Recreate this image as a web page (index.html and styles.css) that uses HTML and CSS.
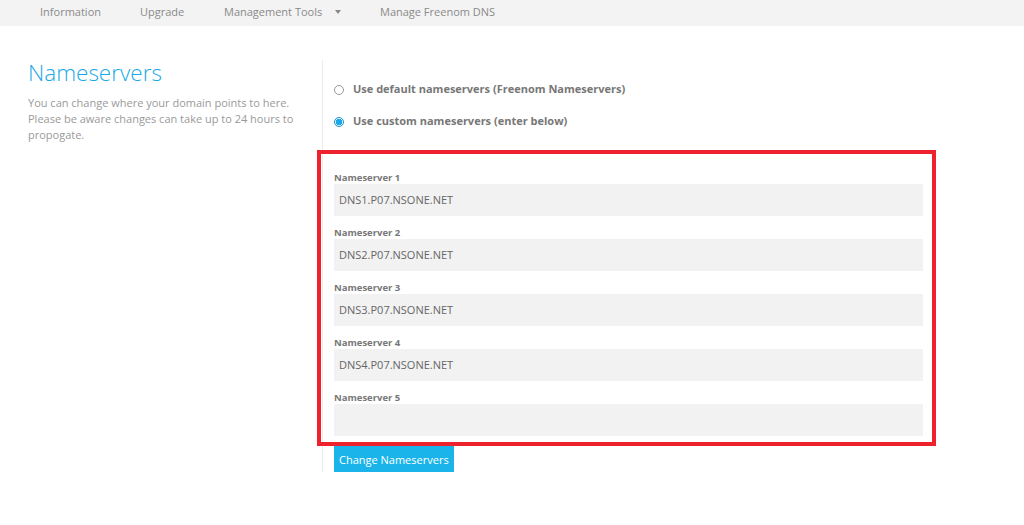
FILE: index.html
```html
<!DOCTYPE html>
<html lang="en">
<head>
<meta charset="utf-8">
<title>Nameservers</title>
<link rel="stylesheet" href="styles.css">
</head>
<body>
<nav class="topnav">
  <a class="nav-item nav-info">Information</a>
  <a class="nav-item nav-upgrade">Upgrade</a>
  <a class="nav-item nav-tools">Management Tools <span class="caret"></span></a>
  <a class="nav-item nav-dns">Manage Freenom DNS</a>
</nav>
<main class="main">
  <section class="intro">
    <h1 class="title">Nameservers</h1>
    <p class="desc">You can change where your domain points to here. Please be aware changes can take up to 24 hours to propogate.</p>
  </section>
  <section class="panel">
    <div class="choice"><span class="radio"></span><span class="choice-label">Use default nameservers (Freenom Nameservers)</span></div>
    <div class="choice"><span class="radio radio-on"></span><span class="choice-label">Use custom nameservers (enter below)</span></div>
    <div class="ns-box">
      <div class="field"><label class="field-label">Nameserver 1</label><div class="field-input">DNS1.P07.NSONE.NET</div></div>
      <div class="field"><label class="field-label">Nameserver 2</label><div class="field-input">DNS2.P07.NSONE.NET</div></div>
      <div class="field"><label class="field-label">Nameserver 3</label><div class="field-input">DNS3.P07.NSONE.NET</div></div>
      <div class="field"><label class="field-label">Nameserver 4</label><div class="field-input">DNS4.P07.NSONE.NET</div></div>
      <div class="field field-last"><label class="field-label">Nameserver 5</label><div class="field-input"></div></div>
    </div>
    <button class="btn">Change Nameservers</button>
  </section>
</main>
</body>
</html>
```
FILE: styles.css
```css
* { box-sizing: border-box; }
html, body { margin: 0; padding: 0; background: #fff; }
body { font-family: "Open Sans", "Liberation Sans", sans-serif; color: #888; }

.topnav {
  height: 26px;
  background: #f3f3f3;
  display: flex;
  align-items: center;
  padding-left: 40px;
  padding-bottom: 3px;
  font-size: 11px;
}
.nav-item { color: #8a8a8a; white-space: nowrap; }
.nav-info { width: 100px; }
.nav-upgrade { width: 84px; }
.nav-tools { width: 156px; }
.caret {
  display: inline-block;
  width: 0; height: 0;
  border-left: 3.5px solid transparent;
  border-right: 3.5px solid transparent;
  border-top: 4px solid #888;
  margin-left: 10px;
  vertical-align: 2px;
}

.main {
  display: flex;
  align-items: flex-start;
  margin-top: 34px;
}
.intro {
  width: 322px;
  padding-left: 28px;
  padding-right: 20px;
}
.title {
  margin: 0;
  font-size: 22.5px;
  line-height: 26px;
  font-weight: 300;
  color: #1aa8e6;
}
.desc {
  margin: 9px 0 0;
  font-size: 11px;
  line-height: 16px;
  color: #9a9a9a;
}

.panel {
  border-left: 1px solid #ececec;
  padding: 18px 0 0 11px;
  width: 614px;
}
.choice {
  display: flex;
  align-items: center;
  height: 20px;
  margin-bottom: 12px;
}
.choice + .choice { margin-bottom: 20px; }
.radio {
  width: 10px; height: 10px;
  border-radius: 50%;
  border: 1px solid #9a9a9a;
  background: #fff;
  margin-right: 9px;
  margin-top: 3px;
  flex: none;
}
.radio-on {
  border-color: #1a8fd0;
  background: radial-gradient(circle, #1aa8e6 0 3px, #e8f4fb 3.5px);
}
.choice-label {
  font-size: 11px;
  font-weight: 700;
  color: #777;
}

.ns-box {
  border: 4px solid #ee222c;
  margin-left: -17px;
  width: 619px;
  padding: 15px 9px 6px 13px;
}
.field { margin-bottom: 8px; }
.field-last { margin-bottom: 0; }
.field-label {
  display: block;
  font-size: 9.5px;
  line-height: 15px;
  font-weight: 700;
  color: #777;
  padding-top: 1px;
  height: 15px;
}
.field-input {
  height: 32px;
  background: #f2f2f2;
  font-size: 11px;
  line-height: 32px;
  padding-left: 5px;
  color: #666;
}

.btn {
  display: block;
  margin-top: 0;
  height: 26px;
  padding: 0 5px;
  border: none;
  background: #1ab4ea;
  color: #fff;
  font-family: "Open Sans", "Liberation Sans", sans-serif;
  font-size: 11px;
}
```
